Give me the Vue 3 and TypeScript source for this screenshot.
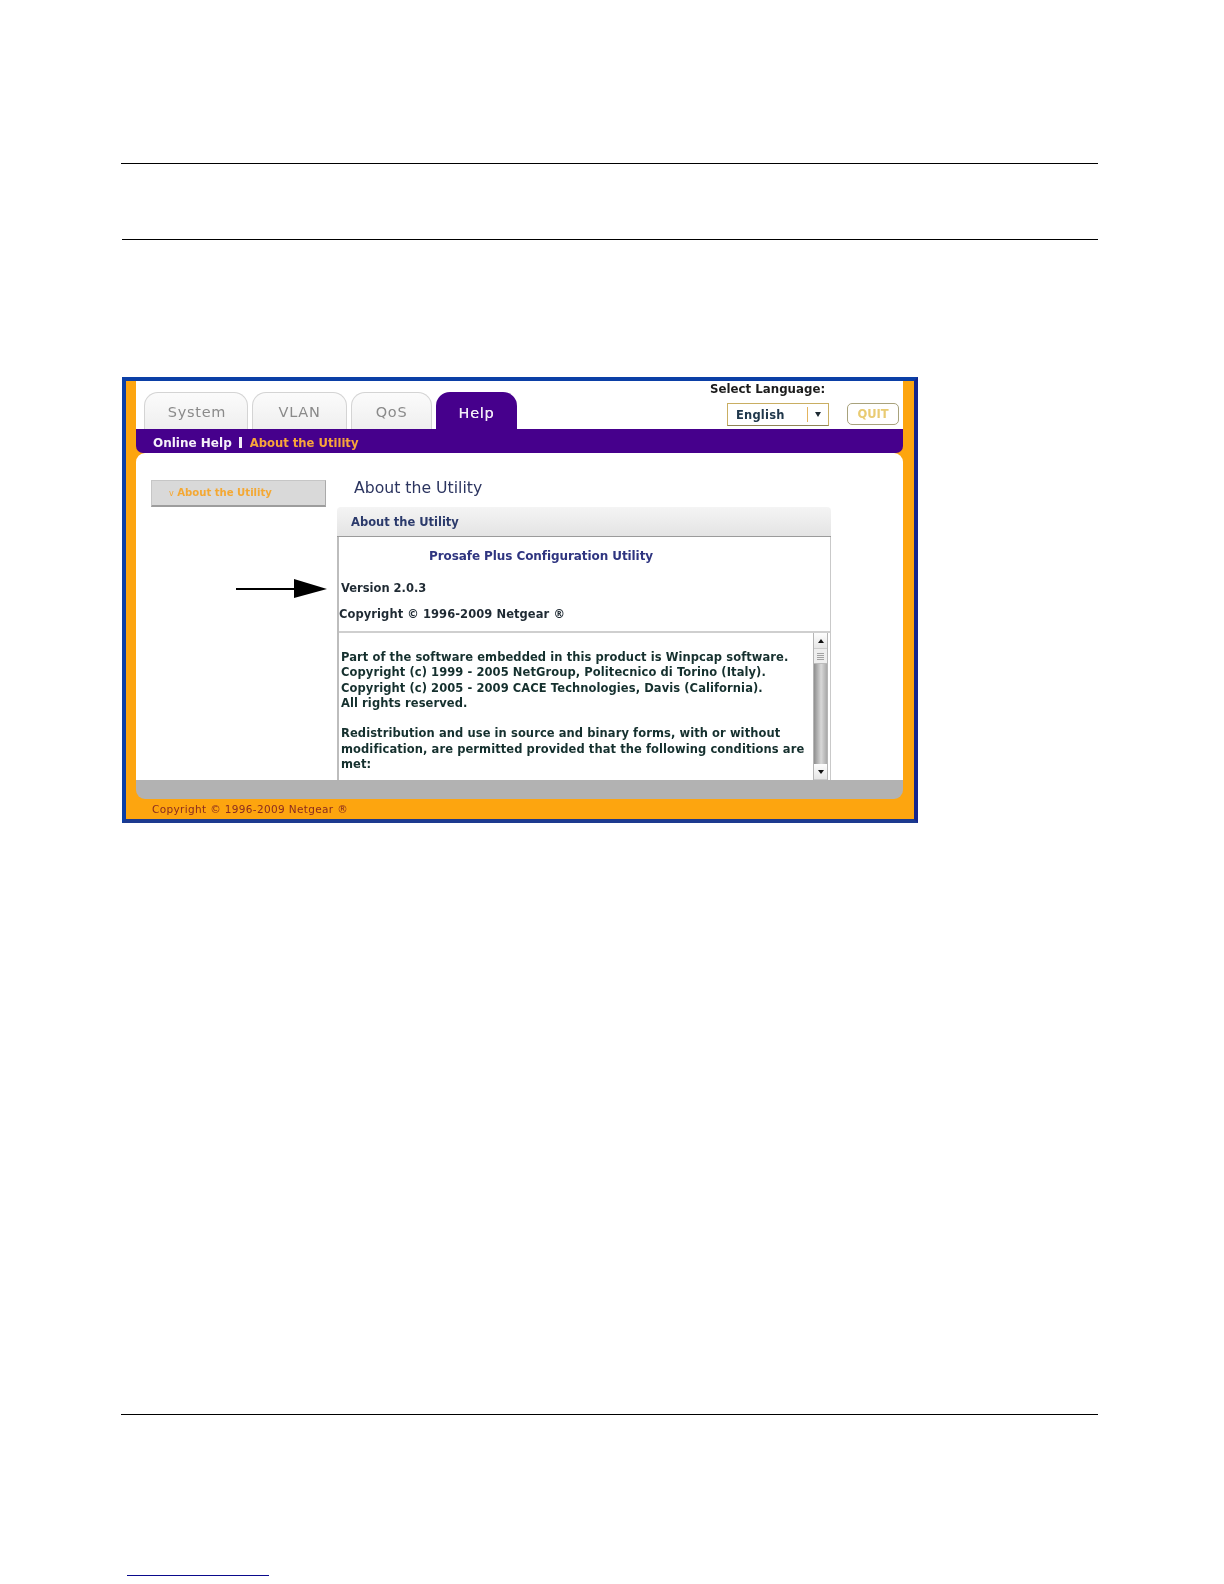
<script setup lang="ts">
const tabs: string[] = ['System', 'VLAN', 'QoS']
const legal: string[] = [
  'Part of the software embedded in this product is Winpcap software.',
  'Copyright (c) 1999 - 2005 NetGroup, Politecnico di Torino (Italy).',
  'Copyright (c) 2005 - 2009 CACE Technologies, Davis (California).',
  'All rights reserved.',
  '\u00a0',
  'Redistribution and use in source and binary forms, with or without',
  'modification, are permitted provided that the following conditions are',
  'met:',
]
</script>

<template>
  <div class="page">
    <hr class="rule rule-a" />
    <hr class="rule rule-b" />
    <div class="shot">
      <div class="topbar">
        <div class="tabs">
          <div v-for="t in tabs" :key="t" class="tab" :class="'tab-' + t">{{ t }}</div>
          <div class="tab tab-active">Help</div>
        </div>
        <div class="lang">
          <div class="lang-label">Select Language:</div>
          <div class="lang-row">
            <div class="select">
              <span class="select-value">English</span>
              <span class="select-btn"><i class="tri-down"></i></span>
            </div>
            <div class="quit">QUIT</div>
          </div>
        </div>
      </div>
      <div class="subnav">
        <span class="sub-a">Online Help</span>
        <span class="sub-sep"></span>
        <span class="sub-b">About the Utility</span>
      </div>
      <div class="content">
        <aside class="side">
          <div class="side-item"><span class="chev">v</span> About the Utility</div>
        </aside>
        <main class="main">
          <h1 class="title">About the Utility</h1>
          <div class="panel-head">About the Utility</div>
          <div class="panel">
            <div class="product">Prosafe Plus Configuration Utility</div>
            <div class="version">Version 2.0.3</div>
            <div class="copy">Copyright © 1996-2009 Netgear ®</div>
            <div class="scrollbox">
              <div class="legal">
                <div v-for="(l, i) in legal" :key="i">{{ l }}</div>
              </div>
              <div class="scrollbar">
                <div class="sb-btn"><i class="tri-up"></i></div>
                <div class="sb-thumb"><b></b><b></b><b></b><b></b></div>
                <div class="sb-track"></div>
                <div class="sb-btn"><i class="tri-down small"></i></div>
              </div>
            </div>
          </div>
        </main>
      </div>
      <div class="graybar"></div>
      <div class="foot">Copyright © 1996-2009 Netgear ®</div>
      <svg class="arrow" width="92" height="20" viewBox="0 0 92 20">
        <rect x="0" y="9" width="60" height="2" fill="#000" />
        <polygon points="58,0 91,10 58,19" fill="#000" />
      </svg>
    </div>
    <hr class="rule rule-c" />
    <div class="footlink"></div>
  </div>
</template>

<style scoped>
.page {
  width: 1224px;
  height: 1584px;
  background: #fff;
  overflow: hidden;
  font-family: "DejaVu Sans", Verdana, sans-serif;
  display: flex;
  flex-direction: column;
}
.rule {
  border: 0;
  background: #000;
  height: 1px;
  width: 977px;
  margin: 0 0 0 121px;
  flex: none;
}
.rule-a { margin-top: 163px; }
.rule-b { margin-top: 75px; margin-left: 122px; width: 976px; }
.shot {
  position: relative;
  margin: 137px 0 0 122px;
  width: 796px;
  height: 446px;
  flex: none;
  box-sizing: border-box;
  border: 4px solid #0b3fa6;
  border-right-color: #15258c;
  border-bottom-color: #1c3a8f;
  background: #fda50f;
  display: flex;
  flex-direction: column;
  filter: blur(0.4px);
}
.topbar {
  height: 48px;
  margin-left: 10px;
  margin-right: 11px;
  background: #fff;
  display: flex;
  flex: none;
}
.tabs {
  display: flex;
  align-items: flex-end;
  padding-left: 8px;
  gap: 4px;
}
.tab {
  height: 37px;
  box-sizing: border-box;
  border: 1px solid #d4d4d4;
  border-bottom: 0;
  border-radius: 14px 14px 0 0;
  background: linear-gradient(#fbfbfb, #efefef);
  color: #8a8a8a;
  font-size: 14.5px;
  line-height: 38px;
  text-align: center;
  letter-spacing: 0.7px;
}
.tab-System { width: 104px; padding-left: 2px; }
.tab-VLAN { width: 95px; }
.tab-QoS { width: 81px; }
.tab-active {
  width: 81px;
  border: 0;
  background: #46008c;
  color: #f3edf8;
  line-height: 42px;
  text-shadow: 0 0 0.4px #f3edf8;
}
.lang {
  margin-left: auto;
  width: 193px;
  display: flex;
  flex-direction: column;
}
.lang-label {
  font-size: 11.8px;
  font-weight: 700;
  color: #1c1c1c;
  line-height: 16px;
}
.lang-row {
  display: flex;
  align-items: center;
  margin-top: 6px;
}
.select {
  margin-left: 17px;
  width: 102px;
  height: 23px;
  box-sizing: border-box;
  border: 1px solid #c9ae62;
  border-bottom-color: #8f8355;
  display: flex;
  align-items: center;
  background: #fff;
}
.select-value {
  flex: 1;
  padding-left: 8px;
  font-size: 11.5px;
  font-weight: 700;
  color: #20384c;
  letter-spacing: 0.2px;
}
.select-btn {
  width: 20px;
  height: 15px;
  border-left: 1px solid #e3b45e;
  display: flex;
  align-items: center;
  justify-content: center;
}
.tri-down, .tri-up {
  display: block;
  width: 0;
  height: 0;
  border-left: 3.5px solid transparent;
  border-right: 3.5px solid transparent;
}
.tri-down { border-top: 5px solid #1d2a33; }
.tri-up { border-bottom: 4px solid #111; }
.tri-down.small { border-top-width: 4px; border-top-color: #111; }
.quit {
  margin: -1px 0 0 18px;
  width: 52px;
  height: 22px;
  box-sizing: border-box;
  border: 1px solid #a8a27c;
  border-radius: 5px;
  color: #e9cb72;
  font-size: 11.5px;
  font-weight: 700;
  line-height: 20px;
  text-align: center;
}
.subnav {
  height: 24px;
  margin: 0 11px 0 10px;
  flex: none;
  background: #46008c;
  border-radius: 0 0 7px 7px;
  box-sizing: border-box;
  padding: 3px 0 0 17px;
  display: flex;
  align-items: center;
  font-weight: 700;
  position: relative;
  z-index: 1;
}
.sub-a { color: #f6f0fa; font-size: 12px; }
.sub-sep {
  width: 3px;
  height: 11px;
  background: #f3edf8;
  margin: 0 8px 0 7px;
}
.sub-b { color: #f9a63a; font-size: 11.6px; }
.content {
  flex: 1;
  min-height: 0;
  margin: 0 11px 0 10px;
  background: #fff;
  display: flex;
  border-radius: 9px 9px 0 0;
  overflow: hidden;
}
.side {
  width: 201px;
  flex: none;
  padding: 27px 0 0 15px;
  box-sizing: border-box;
}
.side-item {
  width: 175px;
  height: 27px;
  box-sizing: border-box;
  background: #d9d9d9;
  border: 1px solid #c6c6c6;
  border-bottom: 2px solid #9d9d9d;
  border-right-color: #aaa;
  color: #f4a833;
  font-size: 10.1px;
  font-weight: 700;
  line-height: 23px;
  padding-left: 17px;
}
.chev { font-size: 8px; font-weight: 400; }
.main {
  width: 494px;
  display: flex;
  flex-direction: column;
  min-height: 0;
}
.title {
  margin: 25px 0 0 17px;
  font-size: 15.7px;
  font-weight: 400;
  line-height: 20px;
  color: #2c3560;
  height: 29px;
  flex: none;
}
.panel-head {
  height: 30px;
  flex: none;
  box-sizing: border-box;
  background: linear-gradient(#f4f4f4, #e4e4e4);
  border-bottom: 1px solid #9b9b9b;
  border-radius: 4px 4px 0 0;
  padding-left: 14px;
  color: #2b3a6b;
  font-size: 11.5px;
  font-weight: 700;
  line-height: 30px;
}
.panel {
  flex: 1;
  min-height: 0;
  box-sizing: border-box;
  border-left: 2px solid #bdbdbd;
  border-right: 1px solid #c9c9c9;
  display: flex;
  flex-direction: column;
  overflow: hidden;
}
.product {
  margin: 9px 0 0 90px;
  height: 20px;
  line-height: 20px;
  color: #2f3580;
  font-size: 12px;
  font-weight: 700;
  letter-spacing: -0.08px;
}
.version {
  margin: 12px 0 0 2px;
  height: 20px;
  line-height: 20px;
  color: #1f2a33;
  font-size: 11.5px;
  font-weight: 700;
}
.copy {
  margin: 6px 0 0 0;
  height: 20px;
  line-height: 20px;
  color: #1f2a33;
  font-size: 11.5px;
  font-weight: 700;
  letter-spacing: 0.07px;
}
.scrollbox {
  margin-top: 7px;
  flex: 1;
  min-height: 0;
  border-top: 2px solid #cfcfcf;
  display: flex;
  overflow: hidden;
}
.legal {
  flex: 1;
  padding: 17px 0 0 2px;
  color: #15302e;
  font-size: 11.5px;
  font-weight: 700;
  line-height: 15.3px;
  white-space: nowrap;
  letter-spacing: 0.08px;
}
.scrollbar {
  width: 15px;
  margin-right: 2px;
  flex: none;
  display: flex;
  flex-direction: column;
  border: 1px solid #b5b5b5;
  border-top: 0;
  border-bottom: 0;
  box-sizing: border-box;
}
.sb-btn {
  height: 16px;
  flex: none;
  background: linear-gradient(#fdfdfd, #e6e6e6);
  display: flex;
  align-items: center;
  justify-content: center;
  border-bottom: 1px solid #ccc;
  box-sizing: border-box;
}
.sb-thumb {
  height: 15px;
  flex: none;
  background: #eeeeee;
  display: flex;
  flex-direction: column;
  align-items: center;
  justify-content: center;
  gap: 1px;
  box-sizing: border-box;
  border-bottom: 1px solid #bbb;
}
.sb-thumb b {
  display: block;
  width: 7px;
  height: 1px;
  background: #a2a2a2;
}
.sb-track {
  flex: 1;
  background: linear-gradient(90deg, #8f8f8f, #d8d8d8 55%, #a9a9a9);
}
.graybar {
  height: 19px;
  flex: none;
  margin: 0 11px 0 10px;
  background: #b2b2b2;
  border-radius: 0 0 9px 9px;
}
.foot {
  height: 20px;
  flex: none;
  padding-left: 26px;
  color: #8a2c20;
  font-size: 10.5px;
  line-height: 21px;
  letter-spacing: 0.35px;
}
.arrow {
  position: absolute;
  left: 110px;
  top: 198px;
}
.rule-c { margin-top: 591px; }
.footlink {
  margin: 160px 0 0 127px;
  width: 142px;
  height: 1px;
  flex: none;
  background: #0a0a8c;
}
</style>
